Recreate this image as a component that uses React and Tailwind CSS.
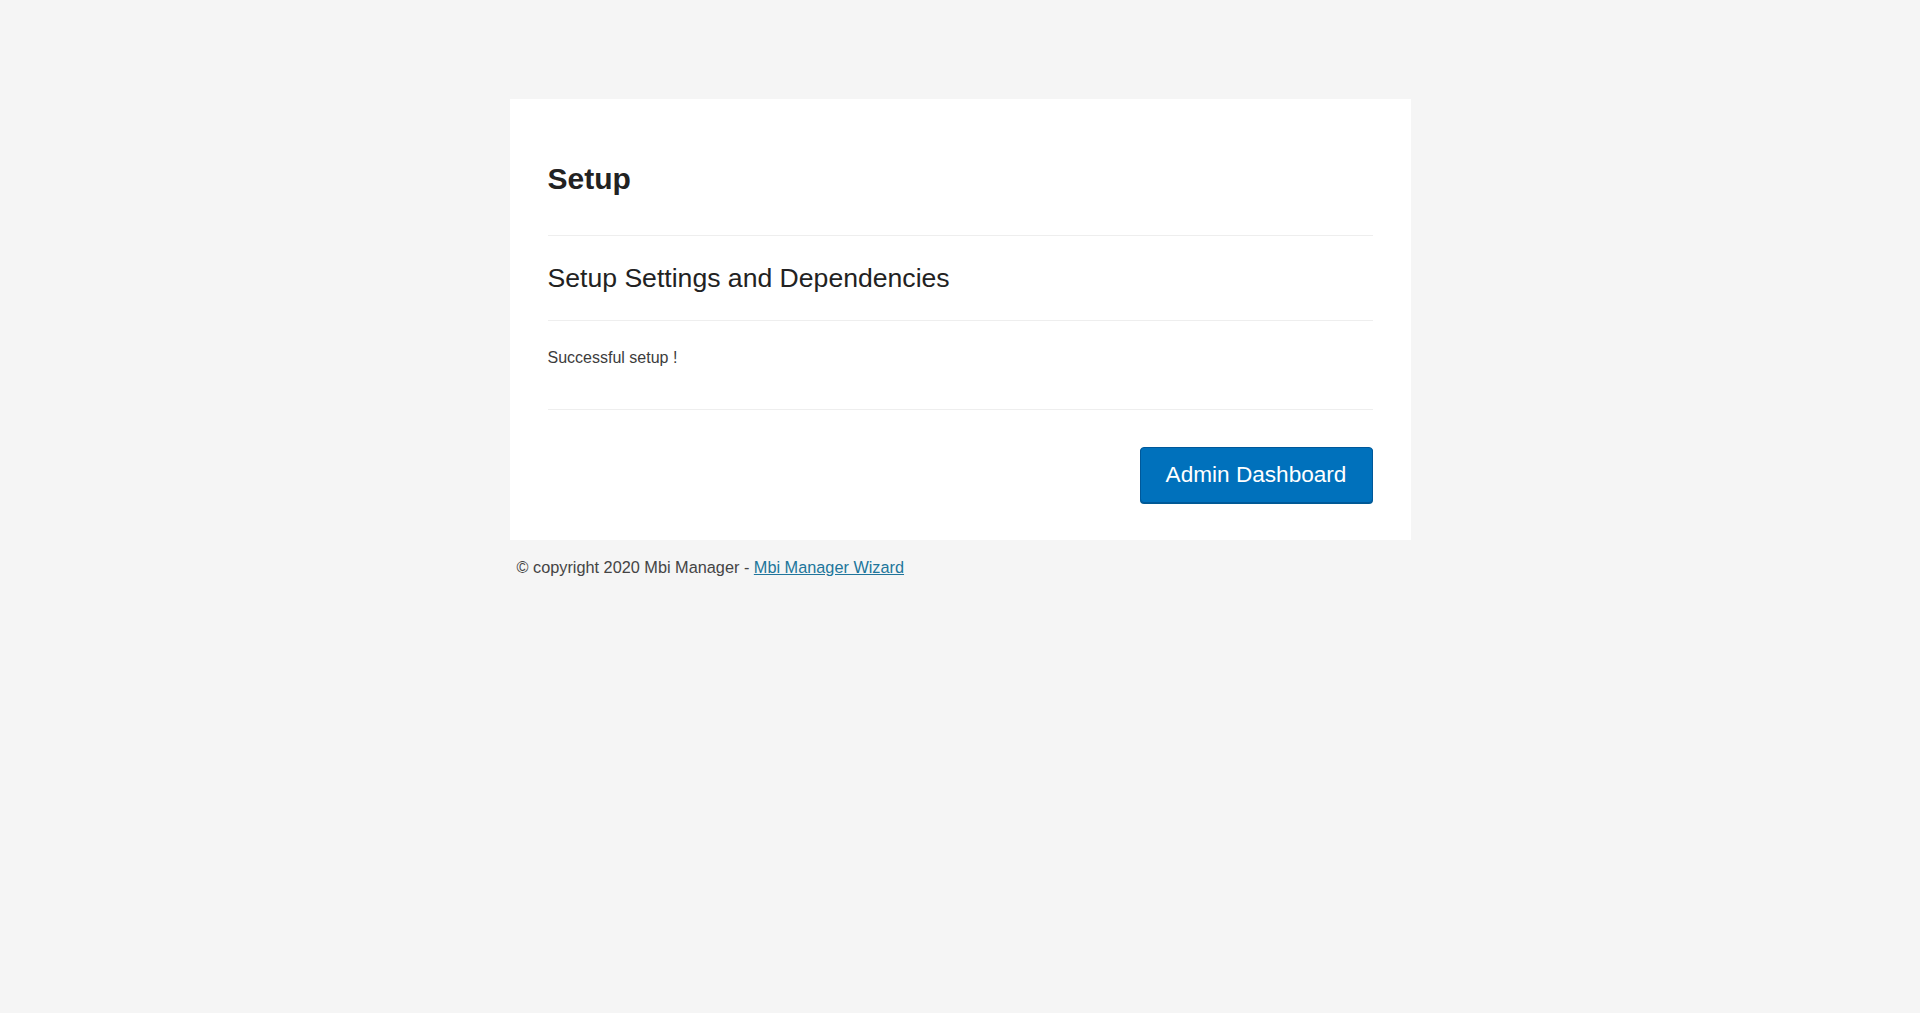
export default function App() {
  return (
    <div className="min-h-screen bg-[#f5f5f5] pt-[99px] font-['Liberation_Sans',Arial,sans-serif]">
      <div className="mx-auto w-[901px]">
        <div className="bg-white px-[38px] pt-[62px] pb-[37px]">
          <h1 className="text-[30px] leading-[35px] font-bold text-[#222]">
            Setup
          </h1>
          <div className="mt-[39px] border-t border-[#eeeeee]"></div>
          <h2 className="mt-[27px] text-[26.6px] leading-[31px] text-[#222]">
            Setup Settings and Dependencies
          </h2>
          <div className="mt-[26px] border-t border-[#eeeeee]"></div>
          <p className="mt-[27px] text-[16px] leading-[20px] text-[#3c3c3c]">
            Successful setup !
          </p>
          <div className="mt-[41px] border-t border-[#eeeeee]"></div>
          <div className="mt-[37px] flex justify-end">
            <button className="flex h-[56px] w-[233px] items-center justify-center rounded-[4px] border border-[#00589a] bg-[#0071bc] text-[22.6px] text-white shadow-[0_1px_0_#005a94]">
              Admin Dashboard
            </button>
          </div>
        </div>
        <p className="mt-[17px] pl-[7px] text-[16.3px] leading-[20px] text-[#444]">
          © copyright 2020 Mbi Manager -{" "}
          <a href="#" className="text-[#21759b] underline">
            Mbi Manager Wizard
          </a>
        </p>
      </div>
    </div>
  );
}
